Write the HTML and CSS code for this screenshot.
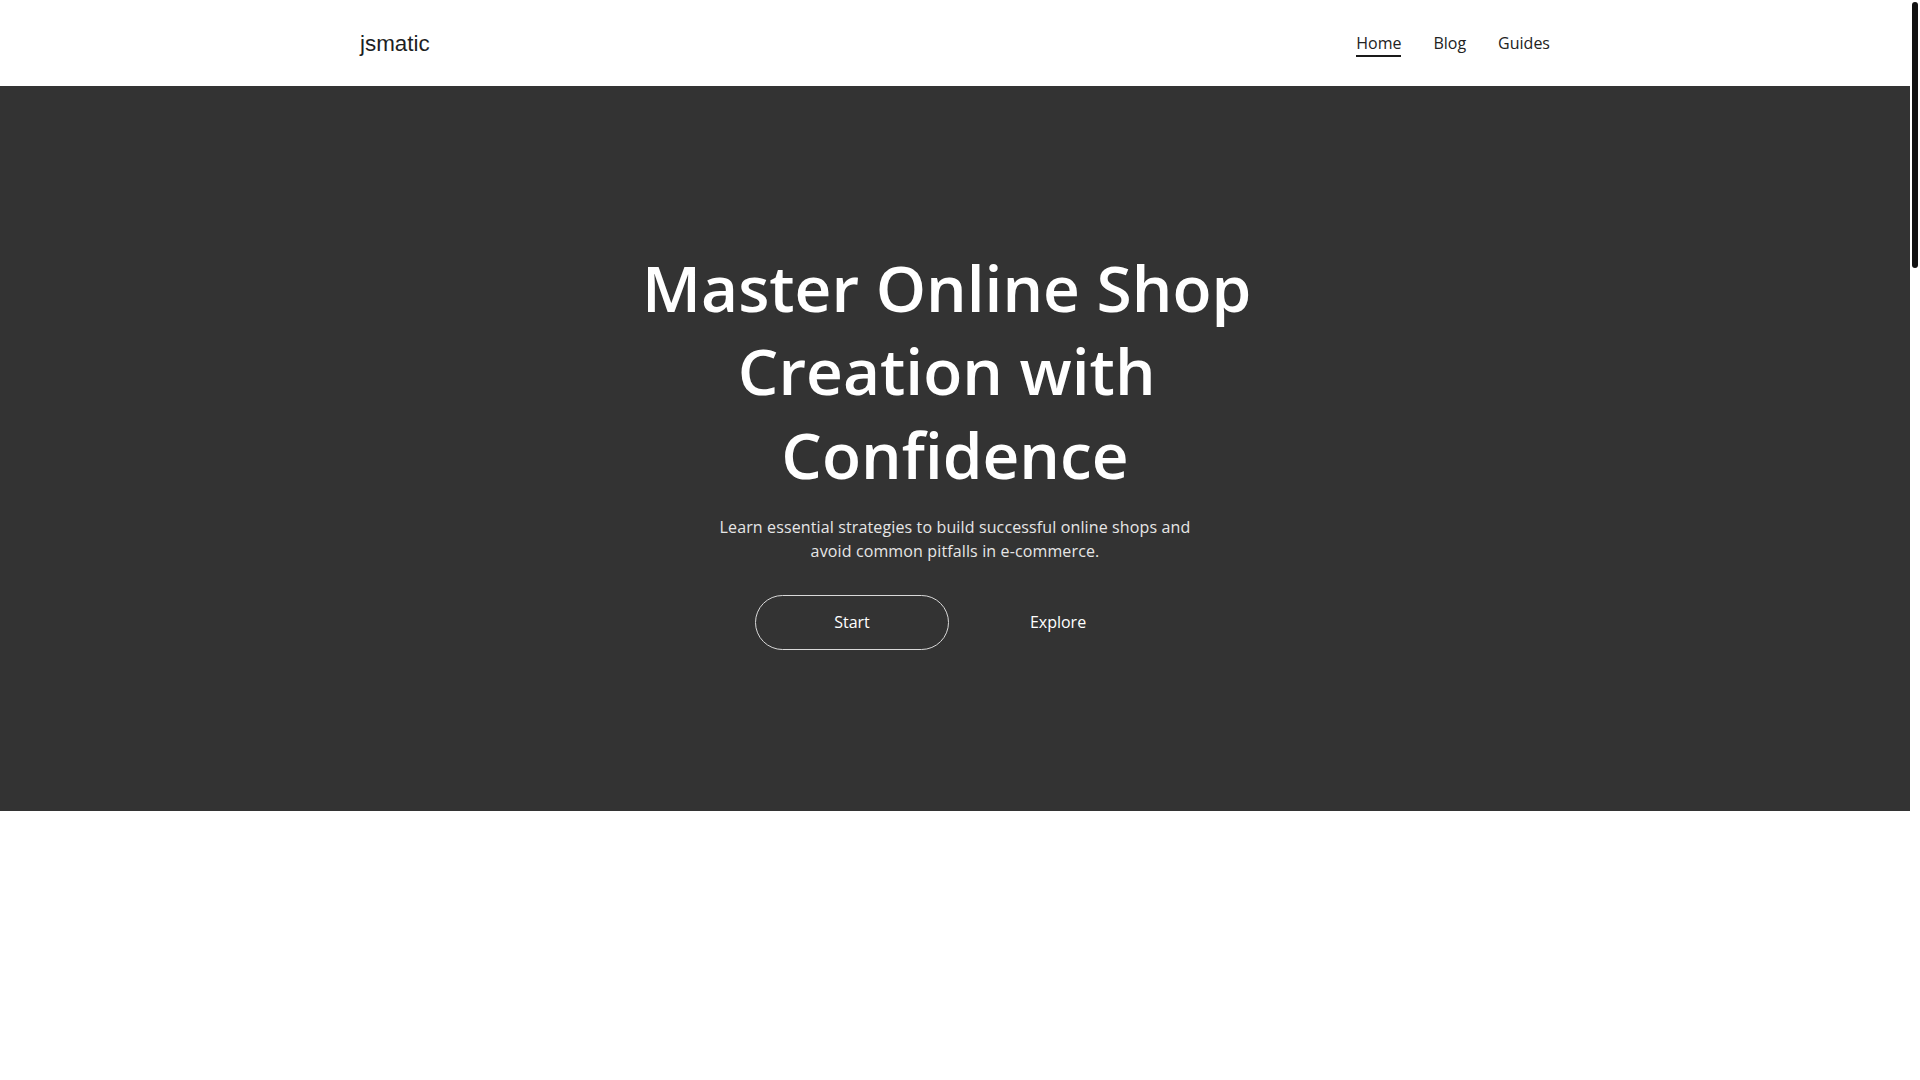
FILE: index.html
```html
<!DOCTYPE html>
<html lang="en">
<head>
<meta charset="utf-8">
<title>jsmatic</title>
<link rel="stylesheet" href="styles.css">
</head>
<body>
<div class="page">
  <header class="site-header">
    <div class="container">
      <a class="logo" href="#">jsmatic</a>
      <nav class="nav">
        <a class="nav-link active" href="#">Home</a>
        <a class="nav-link" href="#">Blog</a>
        <a class="nav-link" href="#">Guides</a>
      </nav>
    </div>
  </header>
  <main>
    <section class="hero">
      <h1 class="hero-title"><span class="word">Master&nbsp;</span><span class="word">Online&nbsp;</span><span class="word">Shop&nbsp;</span><span class="word">Creation&nbsp;</span><span class="word">with&nbsp;</span><span class="word">Confidence</span></h1>
      <p class="hero-text">Learn essential strategies to build successful online shops and avoid common pitfalls in e-commerce.</p>
      <div class="hero-actions">
        <a class="btn btn-outline" href="#">Start</a>
        <a class="btn btn-plain" href="#">Explore</a>
      </div>
    </section>
    <section class="below"></section>
  </main>
</div>
<div class="scrollbar" aria-hidden="true"><div class="scrollbar-thumb"></div></div>
</body>
</html>
```
FILE: styles.css
```css
html, body {
  margin: 0;
  padding: 0;
}
body {
  font-family: "Open Sans", "Noto Sans", sans-serif;
  color: #222;
  background: #fff;
}
a {
  text-decoration: none;
  color: inherit;
}
.page {
  margin-right: 10px;
}
.scrollbar {
  position: fixed;
  top: 0;
  right: 0;
  width: 10px;
  height: 100vh;
  background: #fff;
  box-sizing: border-box;
  padding: 2px;
}
.scrollbar-thumb {
  width: 6px;
  height: 266px;
  border-radius: 3px;
  background: #111;
}
.site-header {
  height: 86px;
  background: #fff;
}
.container {
  max-width: 1190px;
  height: 100%;
  margin: 0 auto;
  display: flex;
  align-items: center;
  justify-content: space-between;
}
.logo {
  font-family: "Liberation Sans", Arial, sans-serif;
  font-size: 22.4px;
  color: #1d1f23;
  line-height: 1;
  padding-top: 2px;
}
.nav {
  display: flex;
  gap: 32px;
  align-items: center;
}
.nav-link {
  display: inline-block;
  font-size: 16px;
  line-height: 24px;
  color: #222;
  border-bottom: 2px solid transparent;
  padding-top: 2px;
}
.nav-link.active {
  border-bottom-color: #1a1a1a;
}
.hero {
  box-sizing: border-box;
  background: #333333;
  height: 725px;
  padding-bottom: 1px;
  display: flex;
  flex-direction: column;
  align-items: center;
  justify-content: center;
  text-align: center;
  color: #fff;
}
.hero-title {
  margin: 0 0 19px;
  max-width: 700px;
  font-size: 64px;
  line-height: 1.3;
  font-weight: 600;
  color: #fff;
}
.word {
  display: inline-block;
}
.hero-text {
  margin: 0 0 32px;
  max-width: 500px;
  font-size: 16px;
  line-height: 24px;
  letter-spacing: 0.13px;
  color: #e6e6e6;
}
.hero-actions {
  display: flex;
  gap: 12px;
}
.btn {
  box-sizing: border-box;
  width: 194px;
  height: 55px;
  display: flex;
  align-items: center;
  justify-content: center;
  border-radius: 999px;
  font-size: 16px;
  line-height: 24px;
  color: #fff;
  border: 1px solid transparent;
}
.btn-outline {
  border-color: #d9d9d9;
}
.below {
  height: 3560px;
  background: #fff;
}
```
